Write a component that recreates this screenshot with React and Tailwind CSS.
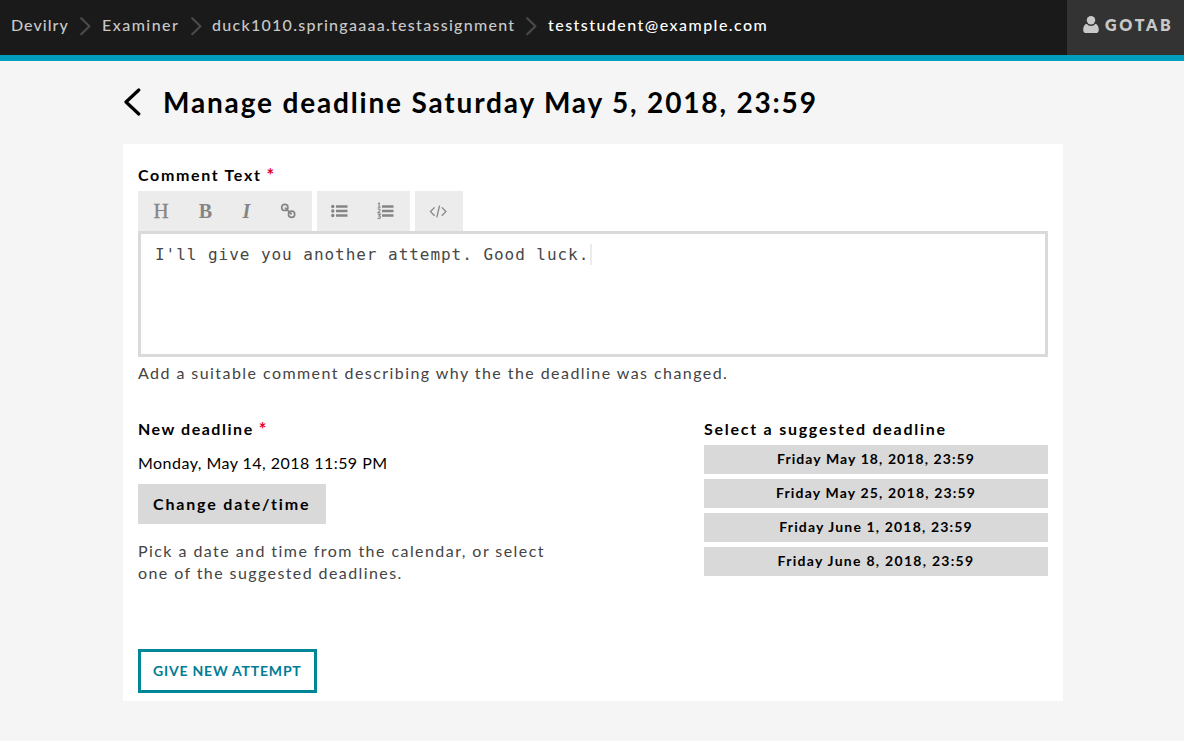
const suggestions = [
  { label: "Friday May 18, 2018, 23:59", tracking: "tracking-[1.08px]" },
  { label: "Friday May 25, 2018, 23:59", tracking: "tracking-[1.16px]" },
  { label: "Friday June 1, 2018, 23:59", tracking: "tracking-[1.15px]" },
  { label: "Friday June 8, 2018, 23:59", tracking: "tracking-[1.28px]" },
];

function Separator() {
  return (
    <svg className="h-[20px] w-[13px] shrink-0" viewBox="0 0 13 20" fill="none" stroke="#4a4a4a" strokeWidth="2.2" strokeLinecap="round" strokeLinejoin="round">
      <path d="M2.2 2.2 10.4 10.2 2.2 18.2" />
    </svg>
  );
}

function UserIcon() {
  return (
    <svg className="h-[19px] w-[16px] shrink-0" viewBox="0 0 16 19" fill="#c9c9c9">
      <circle cx="8" cy="4.3" r="4.2" />
      <path d="M3.6 7.7C1.3 8.4.2 10.9.2 14 .2 16.1 1.4 17.1 3.2 17.1H12.8C14.6 17.1 15.8 16.1 15.8 14 15.8 10.9 14.7 8.4 12.4 7.7A5.4 5.4 0 0 1 3.6 7.7Z" />
    </svg>
  );
}

function LinkIcon() {
  return (
    <svg className="h-4 w-4" viewBox="0 0 16 16" fill="none" stroke="#858585" strokeWidth="1.7">
      <circle cx="4.8" cy="4.4" r="3.1" />
      <circle cx="11.6" cy="11.3" r="3.1" />
      <path d="M5.4 5.2 11.2 10.9" strokeLinecap="round" />
    </svg>
  );
}

function BulletsIcon() {
  return (
    <svg className="h-4 w-[17px]" viewBox="0 0 17 16" fill="#858585">
      <circle cx="1.8" cy="3.5" r="1.7" />
      <circle cx="1.8" cy="8" r="1.7" />
      <circle cx="1.8" cy="12.5" r="1.7" />
      <path d="M5 2.3h11.5v2.4H5zM5 6.8h11.5v2.4H5zM5 11.3h11.5v2.4H5z" />
    </svg>
  );
}

function NumbersIcon() {
  return (
    <svg className="h-[18px] w-[17px]" viewBox="0 0 17 18">
      <path fill="#858585" d="M5 3.3h11.5v2.4H5zM5 7.8h11.5v2.4H5zM5 12.3h11.5v2.4H5z" />
      <path fill="none" stroke="#858585" strokeWidth="1.1" d="M.9 1.8 2.2 1.2V5M.8 5.2H3.7M.8 7.6C1.3 6.6 3.3 6.7 3.2 8 3.1 9 1.3 9.8.9 10.7H3.7M.8 12.3H3.3L2 13.9C3.9 13.9 3.9 16.5 2 16.5 1.4 16.5 1 16.3.7 16" />
    </svg>
  );
}

function CodeIcon() {
  return (
    <svg className="h-4 w-[18px]" viewBox="0 0 18 16" fill="none" stroke="#858585" strokeWidth="1.3">
      <path d="M5.6 4.4 1.5 8.6 5.6 12.8M12.8 4.4 16.9 8.6 12.8 12.8M10.6 2.6 7.8 14.4" />
    </svg>
  );
}

function Required() {
  return <span className="ml-[5px] inline-block translate-y-px text-[18px] leading-none text-[#e3002b]">*</span>;
}

export default function App() {
  return (
    <div className="min-h-[741px] bg-[#f5f5f5] font-[Lato,sans-serif] text-base text-black">
      <header className="flex h-[61px] items-stretch border-b-6 border-[#009ebf] bg-[#1a1a1a] whitespace-nowrap text-[#c8c8c8]">
        <nav className="flex flex-1 items-center pb-1 pl-[11px] font-medium">
          <a className="w-[68px] pb-0.5 tracking-[1.05px]">Devilry</a>
          <Separator />
          <a className="ml-[10px] w-[88px] pb-0.5 tracking-[1.45px]">Examiner</a>
          <Separator />
          <a className="ml-[9px] w-[313px] pb-0.5 tracking-[1.28px]">duck1010.springaaaa.testassignment</a>
          <Separator />
          <a className="ml-[10px] pb-0.5 tracking-[1.46px] text-white">teststudent@example.com</a>
        </nav>
        <button className="flex w-[117px] items-center bg-[#333] pb-[5px] pl-[16px] font-extrabold tracking-[2.7px]">
          <UserIcon />
          <span className="ml-[6px]">GOTAB</span>
        </button>
      </header>

      <main className="ml-[123px] w-[940px]">
        <div className="flex h-[83px] items-center pb-px whitespace-nowrap">
          <svg className="h-[28px] w-[18px]" viewBox="0 0 18 28" fill="none" stroke="#000" strokeWidth="3.2" strokeLinecap="round" strokeLinejoin="round">
            <path d="M15.8 2 3 14 15.8 26" />
          </svg>
          <h1 className="ml-[22px] text-[28px] leading-[36px] font-bold tracking-[1.83px]">Manage deadline Saturday May 5, 2018, 23:59</h1>
        </div>

        <section className="h-[557px] bg-white px-[15px] pt-5">
          <label className="block h-[27px] leading-[22px] font-bold tracking-[1.66px]">Comment Text<Required /></label>
          <div className="flex h-10 gap-[5px] font-['Liberation_Serif',serif] text-[20px] text-[#858585]">
            <div className="flex w-[174px] items-center bg-[#ececec]">
              <span className="w-[46px] pt-0.5 text-center text-[21px] [-webkit-text-stroke:0.3px_#858585]">H</span>
              <span className="w-[43px] text-center font-bold">B</span>
              <span className="w-[39px] text-center font-bold italic">I</span>
              <span className="ml-[14px]"><LinkIcon /></span>
            </div>
            <div className="flex w-[93px] items-center gap-[29px] bg-[#ececec] pl-[14px]">
              <BulletsIcon />
              <NumbersIcon />
            </div>
            <div className="flex w-[48px] items-center bg-[#ececec] pl-[14px]">
              <CodeIcon />
            </div>
          </div>
          <div className="flex h-[126px] items-start border-3 border-[#d9dad9] pt-[10px] pl-[14px] font-['DejaVu_Sans_Mono',monospace] leading-[22px] tracking-[0.96px] text-[#474747]">
            I'll give you another attempt. Good luck.
            <span className="ml-px h-[21px] w-[2px] bg-[#ececec]" />
          </div>
          <p className="mt-[5px] leading-[22px] tracking-[1.44px] text-[#444]">Add a suitable comment describing why the the deadline was changed.</p>

          <div className="mt-[34px] flex h-[231px] justify-between whitespace-nowrap">
            <div>
              <h2 className="h-[22px] leading-[22px] font-bold tracking-[1.53px]">New deadline<Required /></h2>
              <p className="mt-3 leading-[22px] tracking-[0.46px]">Monday, May 14, 2018 11:59 PM</p>
              <button className="mt-[10px] block h-10 w-[188px] bg-[#d9d9d9] pl-[15px] text-left font-bold tracking-[1.82px]">Change date/time</button>
              <p className="mt-[16px] leading-[22px] tracking-[1.44px] text-[#444]">
                Pick a date and time from the calendar, or select<br /><span className="tracking-[1.41px]">one of the suggested deadlines.</span>
              </p>
            </div>
            <div className="w-[344px]">
              <h2 className="leading-[22px] font-bold tracking-[1.75px]">Select a suggested deadline</h2>
              <div className="mt-[5px] flex flex-col gap-[5px] text-[14px] font-bold">
                {suggestions.map((s) => (
                  <button key={s.label} className={`h-[29px] bg-[#d9d9d9] pb-0.5 ${s.tracking}`}>{s.label}</button>
                ))}
              </div>
            </div>
          </div>
          <button className="block h-11 w-[179px] border-3 border-[#008797] pb-0.5 pl-3 text-left text-[14px] font-bold tracking-[0.8px] whitespace-nowrap text-[#007c96]">GIVE NEW ATTEMPT</button>
        </section>
      </main>
    </div>
  );
}
